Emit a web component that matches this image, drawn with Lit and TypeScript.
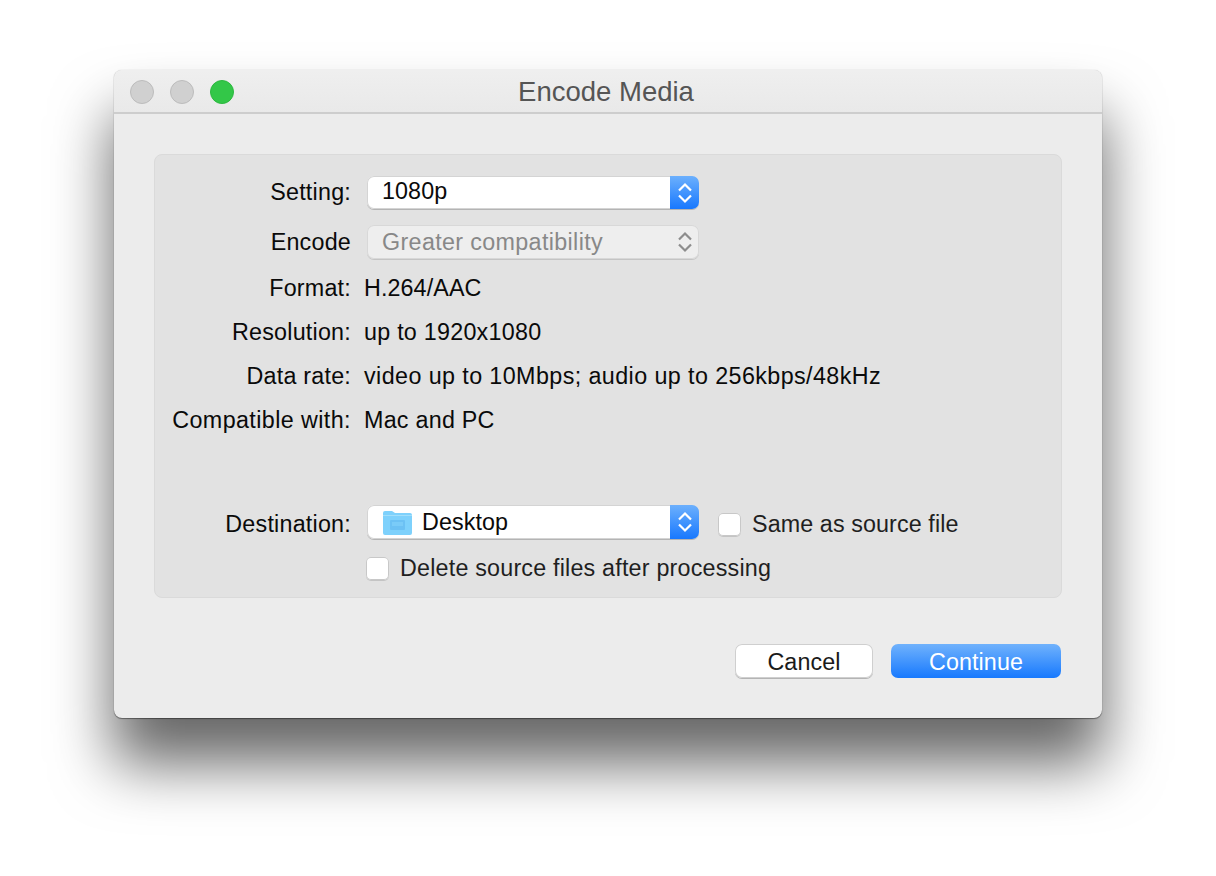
import { LitElement, html, css } from "lit";
import { customElement } from "lit/decorators.js";

const chevrons = html`<svg class="chev" viewBox="0 0 14 22" width="14" height="22" fill="none" stroke="currentColor" stroke-width="2.2"><path d="M1 8.5 7 2.5 13 8.5"/><path d="M1 13.5 7 19.5 13 13.5"/></svg>`;

@customElement("app-root")
export class AppRoot extends LitElement {
  static styles = css`
    :host { display: block; width: 1216px; height: 876px; overflow: hidden; background: #fff; font-family: "Liberation Sans", Arial, sans-serif; font-size: 23.3px; letter-spacing: .1px; color: #0a0a0a; }
    .window { box-sizing: border-box; width: 988px; height: 648px; margin: 70px 0 0 114px; background: #ececec; border-radius: 8px; display: flex; flex-direction: column;
      box-shadow: 0 0 1px rgba(0,0,0,.3), 0 1px 1px rgba(0,0,0,.4), 0 45px 60px 1px rgba(0,0,0,.6); }
    .titlebar { height: 44px; box-sizing: border-box; border-bottom: 2px solid #cdcdcd; background: linear-gradient(#efefef, #e9e9e9); border-radius: 8px 8px 0 0; position: relative; display: flex; align-items: center; justify-content: center; padding: 2px 4px 0 0; }
    .title { font-size: 27.5px; letter-spacing: 0; color: #555; }
    .lights { position: absolute; left: 16px; top: 10px; display: flex; gap: 16px; }
    .light { width: 22px; height: 22px; border-radius: 50%; border: 1px solid #bcbcbc; background: #d0d0d0; }
    .light.green { background: #33c748; border-color: #2cb83f; }
    .panel { box-sizing: border-box; margin: 40px 40px 0 40px; height: 444px; border: 1px solid #dadada; border-radius: 8px; background: #e2e2e2; padding: 21px 0 0; display: flex; flex-direction: column; }
    .row { display: grid; grid-template-columns: 196px 1fr; column-gap: 13px; align-items: center; }
    .row.tall { height: 44px; }
    .label { text-align: right; line-height: 28px; letter-spacing: .22px; }
    .value { line-height: 28px; }
    .num { letter-spacing: .25px; }
    .wide { letter-spacing: .41px; }
    .r1 { height: 33px; }
    .r1 .label { margin-top: -1px; }
    .r2 { height: 34px; margin-top: 16px; margin-bottom: 7px; }
    .r7 { height: 34px; margin-top: 63px; }
    .r7 .label { margin-top: 4px; }
    .r8 { height: 32px; margin-top: 13px; }
    .ctrl { display: flex; align-items: center; margin-left: 3px; }
    .select { box-sizing: border-box; width: 332px; height: 33px; border-radius: 7px; background: #fff; box-shadow: inset 0 0 0 1px #d4d4d4, 0 1px 0 #b4b4b4; display: flex; align-items: center; overflow: hidden; }
    .r2 .select { height: 34px; }
    .r7 .select { height: 34px; }
    .select .text { flex: 1; padding-left: 15px; display: flex; align-items: center; gap: 9px; padding-bottom: 2px; }
    .r2 .select .text, .r7 .select .text { padding-bottom: 0; }
    .stepper { width: 29px; height: 100%; background: linear-gradient(#6cb0fd, #1878fe); color: #fff; display: flex; align-items: center; justify-content: center; }
    .select.off { background: #eeeeee; color: #888; box-shadow: inset 0 0 0 1px #d8d8d8, 0 1px 0 #c4c4c4; letter-spacing: .35px; }
    .select.off .stepper { background: none; color: #8d8d8d; }
    .check { box-sizing: border-box; width: 23px; height: 23px; border-radius: 5px; background: #fff; box-shadow: inset 0 0 0 1px #c8c8c8, 0 1px 0 #c4c4c4; flex: none; }
    .side { display: flex; align-items: center; gap: 11px; margin-left: 19px; color: #1f1f1f; }
    .r7 .side { margin-top: 4px; }
    .r8 .side { gap: 11px; margin-left: -1px; letter-spacing: .2px; }
    .footer { display: flex; justify-content: flex-end; gap: 18px; margin: 46px 41px 0 0; }
    .btn { box-sizing: border-box; height: 34px; border-radius: 7px; display: flex; align-items: center; justify-content: center; padding-top: 2px; }
    .cancel { width: 138px; background: #fff; color: #1a1a1a; box-shadow: inset 0 0 0 1px #cfcfcf, 0 1px 0 #b4b4b4; }
    .continue { width: 170px; background: linear-gradient(#70b2fc, #1779fe); color: #fff; }
    .folder { display: block; }
  `;

  render() {
    return html`
      <div class="window">
        <div class="titlebar">
          <div class="lights"><span class="light"></span><span class="light"></span><span class="light green"></span></div>
          <span class="title">Encode Media</span>
        </div>
        <div class="panel">
          <div class="row r1"><span class="label">Setting:</span>
            <div class="ctrl"><div class="select"><span class="text">1080p</span><span class="stepper">${chevrons}</span></div></div></div>
          <div class="row r2"><span class="label">Encode</span>
            <div class="ctrl"><div class="select off"><span class="text">Greater compatibility</span><span class="stepper">${chevrons}</span></div></div></div>
          <div class="row tall"><span class="label">Format:</span><span class="value">H.264/AAC</span></div>
          <div class="row tall"><span class="label">Resolution:</span><span class="value num">up to 1920x1080</span></div>
          <div class="row tall"><span class="label">Data rate:</span><span class="value wide">video up to 10Mbps; audio up to 256kbps/48kHz</span></div>
          <div class="row tall"><span class="label wide">Compatible with:</span><span class="value num">Mac and PC</span></div>
          <div class="row r7"><span class="label">Destination:</span>
            <div class="ctrl">
              <div class="select"><span class="text">
                <svg class="folder" width="31" height="25" viewBox="0 0 31 25"><path d="M1 3a2 2 0 0 1 2-2h7l3 2h15a2 2 0 0 1 2 2v18a2 2 0 0 1-2 2H3a2 2 0 0 1-2-2z" fill="#7ed1fc"/><rect x="1" y="5" width="29" height="1" fill="#a2dffb"/><rect x="8" y="10" width="15" height="10" rx="1" fill="#6cc1f4"/><rect x="10" y="12" width="11" height="4" fill="#7acbf8"/></svg>
                Desktop</span><span class="stepper">${chevrons}</span></div>
              <div class="side"><span class="check"></span>Same as source file</div>
            </div></div>
          <div class="row r8"><span></span>
            <div class="ctrl"><div class="side"><span class="check"></span>Delete source files after processing</div></div></div>
        </div>
        <div class="footer">
          <div class="btn cancel">Cancel</div>
          <div class="btn continue">Continue</div>
        </div>
      </div>`;
  }
}
